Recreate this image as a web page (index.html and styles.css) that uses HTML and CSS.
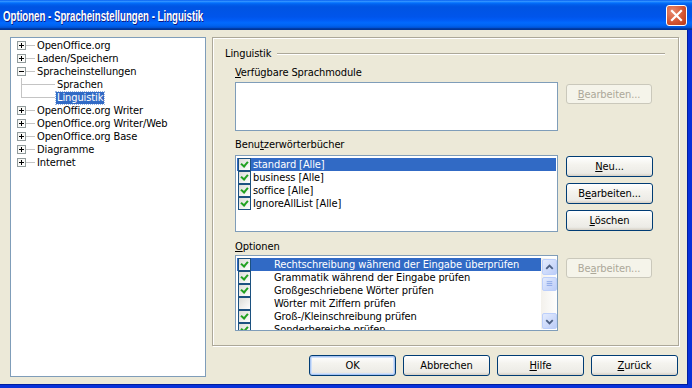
FILE: index.html
```html
<!DOCTYPE html>
<html lang="de">
<head>
    <meta charset="UTF-8">
    <title>Optionen - Spracheinstellungen - Linguistik</title>
    <link rel="stylesheet" href="styles.css">
</head>
<body>
    <div class="window">
        <div class="titlebar">
            <span class="title">Optionen - Spracheinstellungen - Linguistik</span>
            <span class="close">
                <svg width="19" height="19" viewBox="0 0 19 19"><path d="M5 5 L14 14 M14 5 L5 14" stroke="#fff" stroke-width="2.2" stroke-linecap="square"/></svg>
            </span>
        </div>
        <div class="frame">
            <ul class="tree">
                <li class="node"><span class="toggle plus"></span><span class="hline"></span><span class="label">OpenOffice.org</span></li>
                <li class="node"><span class="toggle plus"></span><span class="hline"></span><span class="label">Laden/Speichern</span></li>
                <li class="node"><span class="toggle"></span><span class="hline"></span><span class="label">Spracheinstellungen</span></li>
                <li class="child"><span class="elbow"></span><span class="label">Sprachen</span></li>
                <li class="child last"><span class="elbow"></span><span class="label selected">Linguistik</span></li>
                <li class="node"><span class="toggle plus"></span><span class="hline"></span><span class="label">OpenOffice.org Writer</span></li>
                <li class="node"><span class="toggle plus"></span><span class="hline"></span><span class="label">OpenOffice.org Writer/Web</span></li>
                <li class="node"><span class="toggle plus"></span><span class="hline"></span><span class="label">OpenOffice.org Base</span></li>
                <li class="node"><span class="toggle plus"></span><span class="hline"></span><span class="label">Diagramme</span></li>
                <li class="node"><span class="toggle plus"></span><span class="hline"></span><span class="label">Internet</span></li>
            </ul>

            <div class="main">
                <div class="page">
                    <div class="fixedline"><span>Linguistik</span></div>

                    <div class="field">
                        <div class="caption first"><u>V</u>erfügbare Sprachmodule</div>
                        <div class="row">
                            <div class="list modules"></div>
                            <div class="buttons top2">
                                <button class="btn disabled"><u>B</u>earbeiten...</button>
                            </div>
                        </div>

                        <div class="caption second">Benu<u>t</u>zerwörterbücher</div>
                        <div class="row">
                            <div class="list dicts">
                                <div class="item sel"><span class="chk on"></span><span>standard [Alle]</span></div>
                                <div class="item"><span class="chk on"></span><span>business [Alle]</span></div>
                                <div class="item"><span class="chk on"></span><span>soffice [Alle]</span></div>
                                <div class="item"><span class="chk on"></span><span>IgnoreAllList [Alle]</span></div>
                            </div>
                            <div class="buttons stack">
                                <button class="btn"><u>N</u>eu...</button>
                                <button class="btn">B<u>e</u>arbeiten...</button>
                                <button class="btn"><u>L</u>öschen</button>
                            </div>
                        </div>

                        <div class="caption third"><u>O</u>ptionen</div>
                        <div class="row">
                            <div class="list options">
                                <div class="rows">
                                    <div class="item wide sel"><span class="chk on"></span><span>Rechtschreibung während der Eingabe überprüfen</span></div>
                                    <div class="item wide"><span class="chk on"></span><span>Grammatik während der Eingabe prüfen</span></div>
                                    <div class="item wide"><span class="chk on"></span><span>Großgeschriebene Wörter prüfen</span></div>
                                    <div class="item wide"><span class="chk"></span><span>Wörter mit Ziffern prüfen</span></div>
                                    <div class="item wide"><span class="chk on"></span><span>Groß-/Kleinschreibung prüfen</span></div>
                                    <div class="item wide"><span class="chk on"></span><span>Sonderbereiche prüfen</span></div>
                                </div>
                                <div class="scrollbar">
                                    <span class="sb-btn">
                                        <svg width="14" height="15" viewBox="0 0 14 15"><path d="M3.5 9 L7 5.5 L10.5 9" fill="none" stroke="#4d6185" stroke-width="2"/></svg>
                                    </span>
                                    <span class="sb-thumb">
                                        <svg width="14" height="12" viewBox="0 0 14 12"><path d="M4 3.5 H10 M4 5.5 H10 M4 7.5 H10" stroke="#8aa6e6" stroke-width="1"/></svg>
                                    </span>
                                    <span class="sb-track"></span>
                                    <span class="sb-btn">
                                        <svg width="14" height="15" viewBox="0 0 14 15"><path d="M3.5 6 L7 9.5 L10.5 6" fill="none" stroke="#4d6185" stroke-width="2"/></svg>
                                    </span>
                                </div>
                            </div>
                            <div class="buttons top3">
                                <button class="btn disabled">Be<u>a</u>rbeiten...</button>
                            </div>
                        </div>
                    </div>
                </div>

                <div class="footer">
                    <button class="btn default">OK</button>
                    <button class="btn">Abbrechen</button>
                    <button class="btn"><u>H</u>ilfe</button>
                    <button class="btn"><u>Z</u>urück</button>
                </div>
            </div>
        </div>
    </div>
</body>
</html>
```

FILE: styles.css
```css
body {
    margin: 0;
    width: 692px;
    height: 388px;
    overflow: hidden;
    background: #ece9d8;
}
.window {
    width: 692px;
    height: 388px;
    display: flex;
    flex-direction: column;
    background: #ece9d8; /* XP dialog face */
    font-family: "DejaVu Sans Condensed", "DejaVu Sans", sans-serif;
    font-size: 11px;
    letter-spacing: -0.1px;
    color: #000;
}

/* Title bar */
.titlebar {
    height: 30px;
    flex: none;
    display: flex;
    align-items: center;
    padding-left: 3px;
    background: linear-gradient(to bottom, #0058ee 0%, #3593ff 4%, #288eff 6%, #127dff 8%, #036ffc 10%, #0262ee 14%, #0057e5 20%, #0054e3 24%, #0055eb 56%, #005bf5 66%, #026afe 76%, #0062ef 86%, #0052d6 92%, #0040ab 94%, #003092 100%);
}
.title {
    font-family: "Liberation Sans", Arial, sans-serif;
    font-weight: bold;
    font-size: 14px;
    letter-spacing: 0;
    color: #fff;
    text-shadow: 1px 1px 0 #0a1883;
    margin-top: 1px;
    transform: scaleX(0.69);
    transform-origin: left center;
    white-space: nowrap;
}
.close {
    margin-left: auto;
    margin-right: 5px;
    width: 21px;
    height: 21px;
    box-sizing: border-box;
    border: 1px solid #fff;
    border-radius: 3px;
    background: radial-gradient(circle at 30% 30%, #e88a6e, #d2522f 60%, #b7391a);
    display: flex;
    align-items: center;
    justify-content: center;
}

/* Dialog body */
.frame {
    flex: 1;
    display: flex;
    gap: 6px;
    padding: 7px 9px 8px 10px;
    border-right: 4px solid #0831d9;
    border-bottom: 3px solid #0831d9;
    box-shadow: inset -1px -1px 0 #001ea0;
    min-height: 0;
}

/* Navigation tree */
.tree {
    width: 196px;
    box-sizing: border-box;
    margin: 0;
    padding: 1px 0 0 6px;
    list-style: none;
    background: #fff;
    border: 1px solid #7f9db9;
}
.tree li {
    display: flex;
    align-items: center;
    height: 13px;
    white-space: nowrap;
}
.toggle {
    width: 9px;
    height: 9px;
    box-sizing: border-box;
    border: 1px solid #919b9c;
    background: linear-gradient(#000, #000) center / 5px 1px no-repeat, linear-gradient(135deg, #f4f4f0, #fff);
}
.toggle.plus {
    background: linear-gradient(#000, #000) center / 5px 1px no-repeat, linear-gradient(#000, #000) center / 1px 5px no-repeat, linear-gradient(135deg, #f4f4f0, #fff);
}
.hline {
    width: 9px;
    height: 1px;
    background: #c4c4c4;
}
.label {
    margin-left: 2px;
}
.tree .child {
    padding-left: 4px;
}
.elbow {
    width: 34px;
    height: 13px;
    background: linear-gradient(#c4c4c4, #c4c4c4) 0 6px / 100% 1px no-repeat, linear-gradient(#c4c4c4, #c4c4c4) 0 0 / 1px 100% no-repeat;
}
.child.last .elbow {
    background: linear-gradient(#c4c4c4, #c4c4c4) 0 6px / 100% 1px no-repeat, linear-gradient(#c4c4c4, #c4c4c4) 0 0 / 1px 7px no-repeat;
}
.label.selected {
    margin-left: 1px;
    padding: 0 1px;
    line-height: 12px;
    background: #316ac5;
    color: #fff;
    outline: 1px dotted #9cb6e0;
}

/* Right side */
.main {
    flex: 1;
    display: flex;
    flex-direction: column;
}
.page {
    height: 309px;
    box-sizing: border-box;
    border: 1px solid #aca899;
    box-shadow: 1px 1px 0 #fff, inset 1px 1px 0 #fff;
    padding: 9px 13px 0 12px;
}
.fixedline {
    display: flex;
    align-items: center;
    height: 13px;
}
.fixedline::after {
    content: "";
    flex: 1;
    margin-left: 6px;
    border-top: 1px solid #aca899;
    border-bottom: 1px solid #fff;
}
.field {
    margin-left: 10px;
}
.caption {
    height: 13px;
    line-height: 13px;
}
.caption.first { margin-top: 6px; margin-bottom: 3px; }
.caption.second { margin-top: 7px; margin-bottom: 4px; }
.caption.third { margin-top: 8px; margin-bottom: 2px; }

.row {
    display: flex;
    gap: 8px;
}
.list {
    width: 323px;
    box-sizing: border-box;
    background: #fff;
    border: 1px solid #7f9db9;
    overflow: hidden;
}
.list.modules { height: 49px; }
.list.dicts { height: 77px; padding: 2px 1px 0; }
.list.options {
    height: 76px;
    padding: 2px 0 0 1px;
    display: flex;
}
.rows {
    flex: 1;
    overflow: hidden;
}
.item {
    display: flex;
    align-items: center;
    gap: 2px;
    height: 13px;
    padding-left: 1px;
    white-space: nowrap;
}
.item.wide { gap: 23px; }
.item.sel {
    background: #316ac5;
    color: #fff;
}
.chk {
    position: relative;
    flex: none;
    width: 13px;
    height: 13px;
    box-sizing: border-box;
    border: 1px solid #1c5180;
    background: linear-gradient(135deg, #dcdcd7, #fff);
}
.chk.on::after {
    content: "";
    position: absolute;
    left: 3px;
    top: 1px;
    width: 3px;
    height: 5px;
    border: solid #21a121;
    border-width: 0 2px 2px 0;
    transform: rotate(40deg);
}

/* Scroll bar */
.scrollbar {
    width: 16px;
    display: flex;
    flex-direction: column;
    align-items: center;
    padding: 1px 0 0;
    margin-bottom: 1px;
    background: linear-gradient(to right, #f3f1ec, #fefefe);
}
.sb-btn, .sb-thumb {
    width: 15px;
    box-sizing: border-box;
    border: 1px solid #bccffb;
    border-radius: 2px;
    background: linear-gradient(135deg, #e3ebfd, #bccdf8);
    display: flex;
    align-items: center;
    justify-content: center;
}
.sb-btn { height: 16px; }
.sb-thumb { height: 14px; margin-top: 2px; }
.sb-track { flex: 1; }

/* Buttons */
.buttons {
    display: flex;
    flex-direction: column;
}
.buttons.top2 { padding-top: 2px; }
.buttons.top3 { padding-top: 3px; }
.buttons.stack {
    padding-top: 1px;
    gap: 6px;
}
.btn {
    width: 87px;
    height: 21px;
    padding: 0;
    box-sizing: border-box;
    font-family: inherit;
    font-size: 11px;
    letter-spacing: inherit;
    color: #000;
    border: 1px solid #003c74;
    border-radius: 3px;
    background: linear-gradient(to bottom, #fff 0%, #f4f3ee 40%, #ecebe6 85%, #d6d0c5 100%);
}
.btn.disabled {
    width: 86px;
    height: 20px;
    color: #aca899;
    border-color: #cac8bb;
    background: #f5f4ea;
}
.btn.default {
    box-shadow: inset 0 0 0 1px #a9c5f2, inset 0 0 0 2px #cfe0fa;
}
.footer {
    display: flex;
    justify-content: flex-end;
    gap: 7px;
    margin-top: 9px;
    padding-right: 1px;
}
```
